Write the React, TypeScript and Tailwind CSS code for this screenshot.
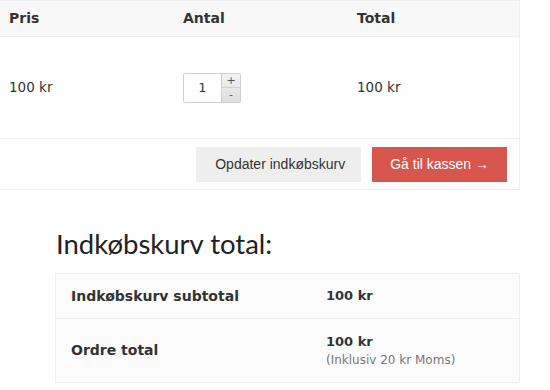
import React from "react";

const verdana = { fontFamily: '"DejaVu Sans", Verdana, sans-serif' };

export default function App() {
  return (
    <div className="w-[550px] h-[390px] bg-white overflow-hidden text-[#333]" style={verdana}>
      {/* cart table */}
      <div className="w-[520px] border-t border-r border-b border-[#eeeeee]">
        <div className="grid grid-cols-[174px_174px_1fr] h-[36px] items-center bg-[#f8f8f8] border-b border-[#eeeeee] text-[14px] font-bold">
          <div className="pl-[9px]">Pris</div>
          <div className="pl-[9px]">Antal</div>
          <div className="pl-[9px]">Total</div>
        </div>
        <div className="grid grid-cols-[174px_174px_1fr] h-[101px] items-center text-[13.5px]">
          <div className="pl-[9px]">100 kr</div>
          <div className="pl-[9px]">
            <div className="flex w-[58px] h-[30px] border border-[#cfcfcf] rounded-[2px] overflow-hidden">
              <div className="flex-1 flex items-center justify-center bg-white text-[13px] border-r border-[#cfcfcf]">1</div>
              <div className="w-[18px] flex flex-col bg-gradient-to-b from-[#f2f2f2] to-[#dedede]">
                <div className="flex-1 flex items-center justify-center text-[11px] leading-none border-b border-[#cfcfcf] text-[#555]">+</div>
                <div className="flex-1 flex items-center justify-center text-[11px] leading-none text-[#555]">-</div>
              </div>
            </div>
          </div>
          <div className="pl-[9px]">100 kr</div>
        </div>
        <div className="flex justify-end items-center gap-[11px] h-[51px] border-t border-[#eeeeee] pr-[12px]" style={{ fontFamily: '"Liberation Sans", Arial, sans-serif' }}>
          <div className="h-[35px] pl-[19px] pr-[16px] flex items-center bg-[#eeeeee] text-[14px] text-[#333]">Opdater indkøbskurv</div>
          <div className="h-[35px] px-[18px] flex items-center bg-[#d6564e] text-[14px] text-white">Gå til kassen →</div>
        </div>
      </div>

      {/* totals */}
      <div className="ml-[55px] w-[465px]">
        <h2 className="mt-[39px] mb-[14px] text-[27.5px] leading-[30px] text-[#222] ml-[1px]" style={{ fontFamily: 'Lato, sans-serif' }}>
          Indkøbskurv total:
        </h2>
        <div className="border border-[#eeeeee] bg-[#fcfcfc]">
          <div className="grid grid-cols-[255px_1fr] h-[45px] items-center border-b border-[#eeeeee] font-bold">
            <div className="pl-[15px] text-[14px]">Indkøbskurv subtotal</div>
            <div className="pl-[15px] text-[13px]">100 kr</div>
          </div>
          <div className="grid grid-cols-[255px_1fr] h-[63px] items-center">
            <div className="pl-[15px] font-bold text-[14px]">Ordre total</div>
            <div className="pl-[15px] flex flex-col">
              <span className="font-bold text-[13px] leading-[18px]">100 kr</span>
              <span className="text-[12px] text-[#777] leading-[18px]">(Inklusiv 20 kr Moms)</span>
            </div>
          </div>
        </div>
      </div>
    </div>
  );
}
